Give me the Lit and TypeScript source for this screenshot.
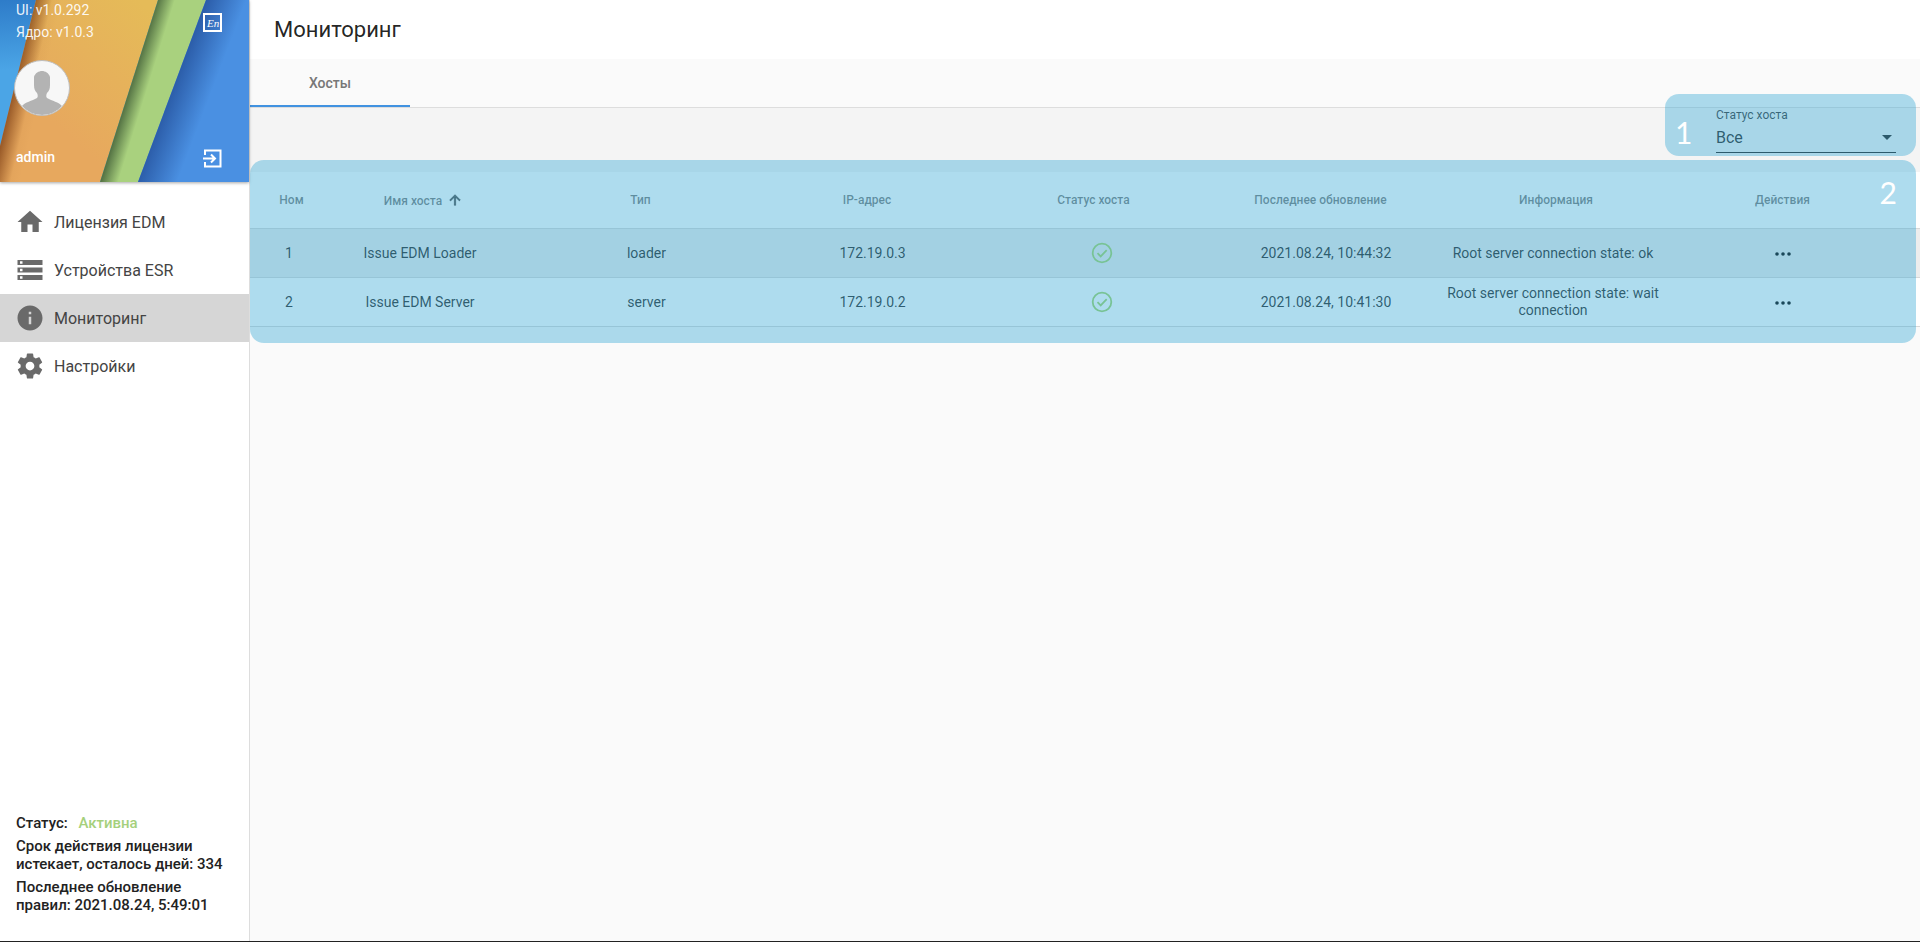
import { LitElement, html, css, svg } from "lit";
import { customElement } from "lit/decorators.js";

const hosts = [
  { n: 1, name: "Issue EDM Loader", type: "loader", ip: "172.19.0.3", time: "2021.08.24, 10:44:32", info: "Root server connection state: ok", hover: true },
  { n: 2, name: "Issue EDM Server", type: "server", ip: "172.19.0.2", time: "2021.08.24, 10:41:30", info: "Root server connection state: wait connection", hover: false },
];

const art = svg`
  <defs>
    <linearGradient id="shOrange" gradientUnits="userSpaceOnUse" x1="18" y1="72" x2="44" y2="78">
      <stop offset="0" stop-color="#6b2c08" stop-opacity=".62"/><stop offset=".65" stop-color="#6b2c08" stop-opacity=".03"/><stop offset="1" stop-color="#6b2c08" stop-opacity="0"/>
    </linearGradient>
    <linearGradient id="shGreen" gradientUnits="userSpaceOnUse" x1="129" y1="91" x2="145" y2="96">
      <stop offset="0" stop-color="#2c4628" stop-opacity=".68"/><stop offset="1" stop-color="#2c4628" stop-opacity="0"/>
    </linearGradient>
    <linearGradient id="shBlue" gradientUnits="userSpaceOnUse" x1="171" y1="91" x2="213" y2="107">
      <stop offset="0" stop-color="#2b5ca8"/><stop offset=".85" stop-color="#4a90e2"/><stop offset="1" stop-color="#4a90e2"/>
    </linearGradient>
    <linearGradient id="orangeTone" gradientUnits="userSpaceOnUse" x1="50" y1="120" x2="150" y2="10">
      <stop offset="0" stop-color="#e7a85e"/><stop offset="1" stop-color="#e5bb58"/>
    </linearGradient>
    <linearGradient id="leftBlue" gradientUnits="userSpaceOnUse" x1="10" y1="0" x2="14" y2="70">
      <stop offset="0" stop-color="#2e7cc9"/><stop offset="1" stop-color="#4ba5e6"/>
    </linearGradient>
  </defs>
  <rect width="249" height="182" fill="#4a90e2"/>
  <polygon points="0,0 36,0 0,146" fill="url(#leftBlue)"/>
  <polygon points="36,0 158,0 100,182 0,182 0,146" fill="url(#orangeTone)"/>
  <polygon points="36,0 158,0 100,182 0,182 0,146" fill="url(#shOrange)"/>
  <polygon points="158,0 206,0 138,182 100,182" fill="#a9d17e"/>
  <polygon points="158,0 206,0 138,182 100,182" fill="url(#shGreen)"/>
  <polygon points="206,0 249,0 249,182 138,182" fill="url(#shBlue)"/>
`;

const icons = {
  home: svg`<path d="M10 20v-6h4v6h5v-8h3L12 3 2 12h3v8z"/>`,
  storage: svg`<path d="M2 20h20v-4H2v4zm2-3h2v2H4v-2zM2 4v4h20V4H2zm4 3H4V5h2v2zm-4 7h20v-4H2v4zm2-3h2v2H4v-2z"/>`,
  info: svg`<path d="M12 2C6.48 2 2 6.48 2 12s4.48 10 10 10 10-4.48 10-10S17.52 2 12 2zm1 15h-2v-6h2v6zm0-8h-2V7h2v2z"/>`,
  settings: svg`<path d="M19.43 12.98c.04-.32.07-.64.07-.98s-.03-.66-.07-.98l2.11-1.65c.19-.15.24-.42.12-.64l-2-3.46c-.12-.22-.39-.3-.61-.22l-2.49 1c-.52-.4-1.08-.73-1.69-.98l-.38-2.65C14.46 2.18 14.25 2 14 2h-4c-.25 0-.46.18-.49.42l-.38 2.65c-.61.25-1.17.59-1.69.98l-2.49-1c-.23-.09-.49 0-.61.22l-2 3.46c-.13.22-.07.49.12.64l2.11 1.65c-.04.32-.07.65-.07.98s.03.66.07.98l-2.11 1.65c-.19.15-.24.42-.12.64l2 3.46c.12.22.39.3.61.22l2.49-1c.52.4 1.08.73 1.69.98l.38 2.65c.03.24.24.42.49.42h4c.25 0 .46-.18.49-.42l.38-2.65c.61-.25 1.17-.59 1.69-.98l2.49 1c.23.09.49 0 .61-.22l2-3.46c.12-.22.07-.49-.12-.64l-2.11-1.65zM12 15.5c-1.93 0-3.5-1.57-3.5-3.5s1.57-3.5 3.5-3.5 3.5 1.57 3.5 3.5-1.57 3.5-3.5 3.5z"/>`,
};

const nav = [
  { icon: icons.home, label: "Лицензия EDM", active: false },
  { icon: icons.storage, label: "Устройства ESR", active: false },
  { icon: icons.info, label: "Мониторинг", active: true },
  { icon: icons.settings, label: "Настройки", active: false },
];

const columns = ["Ном", "Имя хоста", "Тип", "IP-адрес", "Статус хоста", "Последнее обновление", "Информация", "Действия"];
const headClass = ["", "sorted", "", "", "", "h-time", "h-info", "last"];
const widths = [83, 174, 267, 186, 267, 198, 248];

@customElement("app-root")
export class AppRoot extends LitElement {
  static styles = css`
    :host {
      display: block;
      height: 942px;
      position: relative;
      overflow: hidden;
      font-family: Roboto, "Liberation Sans", sans-serif;
      background: #fafafa;
      color: rgba(0, 0, 0, 0.87);
    }
    .layout { display: flex; height: 941px; }
    .blackline { height: 1px; background: #222; }
    .side {
      width: 249px;
      flex: none;
      background: #fff;
      border-right: 1px solid #ddd;
      display: flex;
      flex-direction: column;
    }
    .head {
      height: 182px;
      position: relative;
      color: #fff;
      box-shadow: 0 1px 3px rgba(0, 0, 0, 0.35);
      overflow: hidden;
      flex: none;
    }
    .art { position: absolute; inset: 0; width: 249px; height: 182px; }
    .head-in { position: relative; height: 182px; display: flex; flex-direction: column; padding: 0 16px; box-sizing: border-box; }
    .ver { font-size: 14px; line-height: 22px; color: rgba(255,255,255,.92); margin-top: -1px; height: 22px; flex: none; }
    .ver + .ver { margin-top: 0; }
    .avatar { width: 54px; height: 54px; border-radius: 50%; border: 1px solid #bdbdbd; background: #f7f7f7; margin: 17px 0 0 -2px; display: block; flex: none; }
    .admin { font-size: 14px; font-weight: 500; line-height: 20px; margin-top: 31px; }
    .ic-en { position: absolute; left: 203px; top: 13px; width: 19px; height: 19px; }
    .ic-out { position: absolute; left: 203px; top: 149px; width: 19px; height: 19px; }
    .nav { padding-top: 16px; display: flex; flex-direction: column; }
    .nav-item { height: 48px; display: flex; align-items: center; padding-left: 15px; font-size: 16px; color: #444; }
    .nav-item.active { background: #d6d6d6; }
    .nav-item svg { width: 30px; height: 30px; fill: #6a6a6a; flex: none; margin-right: 9px; }
    .foot { margin-top: auto; padding: 0 16px 22px; font-size: 15px; font-weight: 500; line-height: 18px; color: #222; }
    .foot p { margin: 0 0 5px; }
    .foot .ok { color: #a5d07c; margin-left: 7px; }
    .main { flex: 1; min-width: 0; display: flex; flex-direction: column; background: #fafafa; }
    .title { height: 59px; box-sizing: border-box; padding: 0 0 0 24px; background: #fff; display: flex; align-items: center; font-size: 22px; font-weight: 400; flex: none; }
    .tabs { height: 48px; display: flex; border-bottom: 1px solid #ddd; flex: none; background: #fafafa; }
    .tab { width: 160px; display: flex; align-items: center; justify-content: center; padding-top: 1px; font-size: 14px; font-weight: 500; color: #777; border-bottom: 2px solid #4192e0; box-sizing: border-box; height: 48px; }
    .filter { height: 64px; background: #f4f4f4; display: flex; justify-content: flex-end; flex: none; padding-right: 24px; }
    .field { width: 180px; box-sizing: border-box; }
    .field label { display: block; font-size: 12px; line-height: 14px; color: rgba(0,0,0,.8); }
    .select { display: flex; justify-content: space-between; align-items: center; height: 26px; padding-bottom: 2px; margin-top: 2px; font-size: 16px; border-bottom: 1px solid rgba(0,0,0,.87); }
    .caret { width: 0; height: 0; border-left: 5px solid transparent; border-right: 5px solid transparent; border-top: 5px solid rgba(0,0,0,.87); margin-right: 4px; }
    table { width: 100%; border-collapse: collapse; table-layout: fixed; background: #fff; flex: none; }
    th { height: 56px; font-size: 12px; font-weight: 500; color: rgba(0,0,0,.54); text-align: center; padding: 0; border-bottom: 1px solid #d8d8d8; box-sizing: border-box; }
    th.sorted { padding-left: 7px; }
    th.h-time { padding-right: 11px; }
    th.h-info { padding-left: 14px; }
    th.last, td.last { padding-right: 28px; }
    td { height: 49px; font-size: 14px; line-height: 17px; text-align: center; padding: 2px 0 0; border-bottom: 1px solid #d8d8d8; box-sizing: border-box; }
    tr.hover td { background: #ededed; }
    td.num { padding-right: 5px; }
    td.type { padding-left: 12px; }
    td.ip { padding-left: 11px; }
    .sort { width: 16px; height: 16px; vertical-align: -3px; margin-left: 5px; fill: rgba(0,0,0,.65); stroke: rgba(0,0,0,.65); stroke-width: 1; }
    td.status { padding: 0 0 0 16px; }
    .check { width: 22px; height: 22px; display: block; margin: 0 auto; fill: none; }
    .dots { width: 16px; height: 4px; display: block; margin: 0 auto; }
    td.infocell { padding: 1px 12px 0 20px; }
    .note {
      position: absolute;
      background: rgba(62, 171, 214, 0.42);
      border-radius: 14px;
      color: #fff;
      font-family: Lato, "Open Sans", sans-serif;
      font-size: 30px;
      line-height: 30px;
      pointer-events: none;
    }
    .note span { position: absolute; }
    .n1 { left: 1665px; top: 94px; width: 251px; height: 62px; }
    .n1 span { left: 10px; top: 23px; }
    .n2 { left: 250px; top: 160px; width: 1666px; height: 183px; }
    .n2 span { right: 19px; top: 17px; }
  `;

  render() {
    return html`
      <div class="layout">
        <aside class="side">
          <div class="head">
            <svg class="art" viewBox="0 0 249 182">${art}</svg>
            <div class="head-in">
              <div class="ver">UI: v1.0.292</div>
              <div class="ver">Ядро: v1.0.3</div>
              <svg class="avatar" viewBox="0 0 54 54">
                <path d="M7 45c3-4 10-5 15-8 1-1 1-3 0-5-2-2-3-4-3-8v-8c1-4 5-6 8-6s7 2 8 6v8c0 4-1 6-3 8-1 2-1 4 0 5 5 3 12 4 15 8-5 6-12 9-20 9S12 51 7 45z" fill="#b3b3b3"/>
              </svg>
              <div class="admin">admin</div>
            </div>
            <svg class="ic-en" viewBox="0 0 19 19">
              <rect x="1" y="1" width="17" height="17" fill="none" stroke="#fff" stroke-width="2"/>
              <text x="4" y="13.500" font-size="11" fill="#fff" font-style="italic" font-family="Liberation Serif, serif">En</text>
            </svg>
            <svg class="ic-out" viewBox="0 0 19 19">
              <path d="M2 6V1.500h15.500v16H2V13" fill="none" stroke="#fff" stroke-width="2"/>
              <path d="M0 9.500h11M8 5.500l4 4-4 4" fill="none" stroke="#fff" stroke-width="2"/>
            </svg>
          </div>
          <nav class="nav">
            ${nav.map(
              (n) => html`<div class="nav-item ${n.active ? "active" : ""}">
                <svg viewBox="0 0 24 24">${n.icon}</svg>${n.label}
              </div>`
            )}
          </nav>
          <div class="foot">
            <p>Статус: <span class="ok">Активна</span></p>
            <p>Срок действия лицензии истекает, осталось дней: 334</p>
            <p>Последнее обновление правил: 2021.08.24, 5:49:01</p>
          </div>
        </aside>
        <main class="main">
          <div class="title">Мониторинг</div>
          <div class="tabs"><div class="tab">Хосты</div></div>
          <div class="filter">
            <div class="field">
              <label>Статус хоста</label>
              <div class="select">Все<span class="caret"></span></div>
            </div>
          </div>
          <table>
            <colgroup>
              ${widths.map((w) => html`<col style="width:${w}px" />`)}
              <col />
            </colgroup>
            <thead>
              <tr>
                ${columns.map(
                  (c, i) => html`<th class=${headClass[i]}>${c}${i === 1
                    ? html`<svg class="sort" viewBox="0 0 24 24"><path d="M4 12l1.410 1.410L11 7.830V20h2V7.830l5.580 5.590L20 12l-8-8-8 8z"/></svg>`
                    : ""}</th>`
                )}
              </tr>
            </thead>
            <tbody>
              ${hosts.map(
                (h) => html`<tr class=${h.hover ? "hover" : ""}>
                  <td class="num">${h.n}</td>
                  <td>${h.name}</td>
                  <td class="type">${h.type}</td>
                  <td class="ip">${h.ip}</td>
                  <td class="status">
                    <svg class="check" viewBox="0 0 22 22">
                      <circle cx="11" cy="11" r="9.300" stroke="#a2d467" stroke-width="1.800"/>
                      <path d="M6.500 11.200l3.200 3.200 6-6.200" stroke="#a2d467" stroke-width="1.800"/>
                    </svg>
                  </td>
                  <td>${h.time}</td>
                  <td class="infocell">${h.info}</td>
                  <td class="last">
                    <svg class="dots" viewBox="0 0 16 4"><circle cx="2" cy="2" r="1.800" fill="#000"/><circle cx="8" cy="2" r="1.800" fill="#000"/><circle cx="14" cy="2" r="1.800" fill="#000"/></svg>
                  </td>
                </tr>`
              )}
            </tbody>
          </table>
        </main>
      </div>
      <div class="blackline"></div>
      <div class="note n1"><span>1</span></div>
      <div class="note n2"><span>2</span></div>
    `;
  }
}
